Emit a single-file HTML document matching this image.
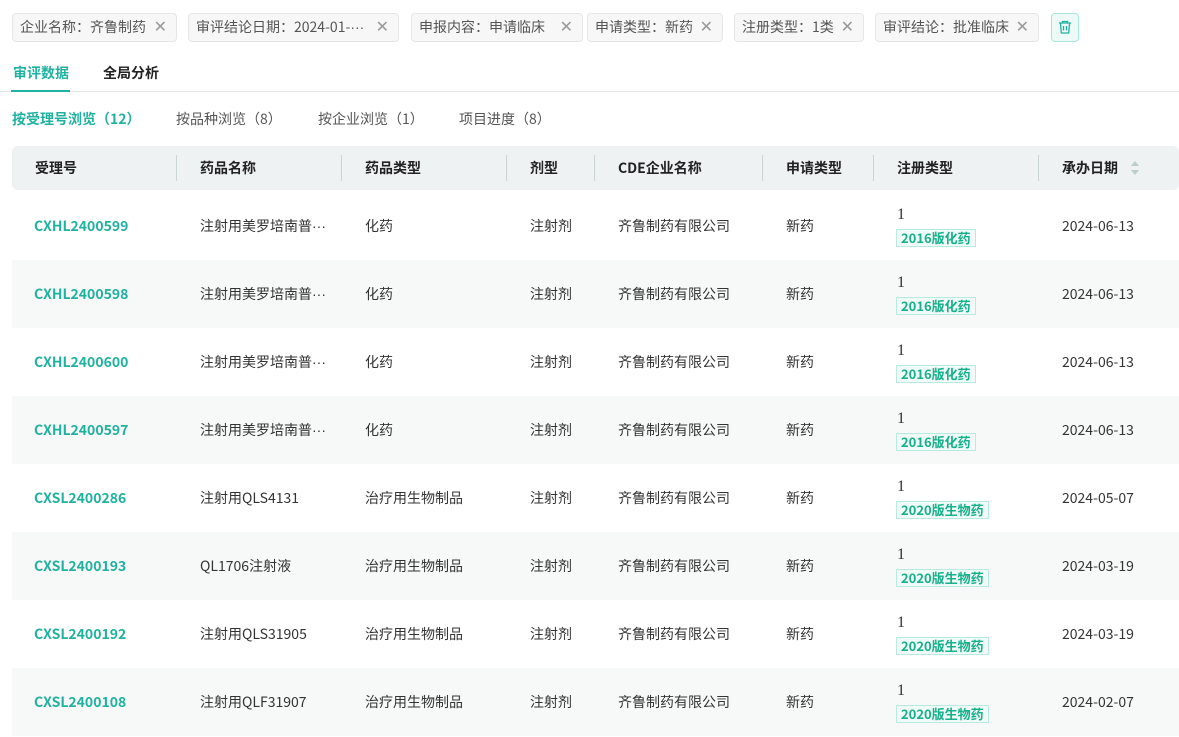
<!DOCTYPE html>
<html><head><meta charset="utf-8"><style>
*{margin:0;padding:0;box-sizing:border-box}
body{width:1179px;height:737px;overflow:hidden;background:#fff;font-family:"Noto Sans CJK SC","Liberation Sans",sans-serif;color:#333;font-size:14px;line-height:20px;position:relative}
.a{position:absolute;white-space:nowrap}
.tag{position:absolute;top:13px;height:29px;border:1px solid #e6e6e6;background:#f7f7f7;border-radius:4px;color:#555;font-size:14px;line-height:27px;padding-left:7px;white-space:nowrap}
.tag .x{position:absolute;right:9px;top:0;color:#999;font-size:16px;font-family:"Liberation Sans",sans-serif}
.el{font-family:"Liberation Sans",sans-serif}
.hdr{position:absolute;left:12px;top:146px;width:1167px;height:44px;background:#eef2f2;border-radius:6px}
.h{position:absolute;top:158px;font-weight:bold;color:#222;font-size:14px}
.dv{position:absolute;top:155px;width:1px;height:26px;background:#ccd5d5}
.row{position:absolute;left:12px;width:1167px;height:68px}
.c{position:absolute;font-size:14px;color:#333;white-space:nowrap}
.id{color:#20b2a0;font-weight:bold}
.bd{position:absolute;height:18px;border:1px solid #b8eadf;background:#f0fbf8;color:#16b08a;font-weight:bold;font-size:13px;line-height:16px;padding:0 4px}
</style></head><body>
<div class="tag" style="left:12px;width:165px">企业名称：齐鲁制药<span class="x">✕</span></div>
<div class="tag" style="left:188px;width:211px">审评结论日期：2024-01-<span class="el">···</span><span class="x">✕</span></div>
<div class="tag" style="left:411px;width:172px">申报内容：申请临床<span class="x">✕</span></div>
<div class="tag" style="left:587px;width:136px">申请类型：新药<span class="x">✕</span></div>
<div class="tag" style="left:734px;width:130px">注册类型：1类<span class="x">✕</span></div>
<div class="tag" style="left:875px;width:164px">审评结论：批准临床<span class="x">✕</span></div>
<div style="position:absolute;left:1051px;top:13px;width:28px;height:29px;border:1px solid #a8e6dc;background:#eefaf8;border-radius:4px">
<svg width="26" height="27" viewBox="0 0 26 27"><g fill="none" stroke="#20b2a0" stroke-width="1.3"><path d="M7 9h12M10.5 9V7.5h5V9M8.5 9.5l.8 9.5h7.4l.8-9.5M11.5 12v4.5M14.5 12v4.5"/></g></svg></div>
<div class="a" style="left:13px;top:63px;font-weight:bold;color:#20b2a0">审评数据</div>
<div class="a" style="left:103px;top:63px;font-weight:bold;color:#222">全局分析</div>
<div class="a" style="left:0;top:91px;width:1179px;height:1px;background:#e6e6e6"></div>
<div class="a" style="left:11px;top:90px;width:59px;height:2px;background:#20b2a0"></div>
<div class="a" style="left:12px;top:109px;font-weight:bold;color:#20b2a0">按受理号浏览（12）</div>
<div class="a" style="left:176px;top:109px;color:#555">按品种浏览（8）</div>
<div class="a" style="left:318px;top:109px;color:#555">按企业浏览（1）</div>
<div class="a" style="left:459px;top:109px;color:#555">项目进度（8）</div>
<div class="hdr"></div>
<div class="h" style="left:35px">受理号</div><div class="dv" style="left:176px"></div>
<div class="h" style="left:200px">药品名称</div><div class="dv" style="left:341px"></div>
<div class="h" style="left:365px">药品类型</div><div class="dv" style="left:506px"></div>
<div class="h" style="left:530px">剂型</div><div class="dv" style="left:594px"></div>
<div class="h" style="left:618px">CDE企业名称</div><div class="dv" style="left:762px"></div>
<div class="h" style="left:786px">申请类型</div><div class="dv" style="left:873px"></div>
<div class="h" style="left:897px">注册类型</div><div class="dv" style="left:1038px"></div>
<div class="h" style="left:1062px">承办日期</div>
<svg class="a" style="left:1130px;top:160px" width="10" height="16"><path d="M1 6l4-5 4 5z M1 10l4 5 4-5z" fill="#bcc"/></svg>
<div id="rows"></div>
<script>
var E='<span class="el">···</span>';
var d=[["CXHL2400599","注射用美罗培南普"+E,"化药","2016版化药","2024-06-13"],
["CXHL2400598","注射用美罗培南普"+E,"化药","2016版化药","2024-06-13"],
["CXHL2400600","注射用美罗培南普"+E,"化药","2016版化药","2024-06-13"],
["CXHL2400597","注射用美罗培南普"+E,"化药","2016版化药","2024-06-13"],
["CXSL2400286","注射用QLS4131","治疗用生物制品","2020版生物药","2024-05-07"],
["CXSL2400193","QL1706注射液","治疗用生物制品","2020版生物药","2024-03-19"],
["CXSL2400192","注射用QLS31905","治疗用生物制品","2020版生物药","2024-03-19"],
["CXSL2400108","注射用QLF31907","治疗用生物制品","2020版生物药","2024-02-07"]];
var h="";
d.forEach(function(r,i){var y=192+i*68;
h+='<div class="row" style="top:'+y+'px;background:'+(i%2?'#f7f8f8':'#fff')+'"></div>';
var t=y+24;
h+='<div class="c id" style="left:34px;top:'+t+'px">'+r[0]+'</div>';
h+='<div class="c" style="left:200px;top:'+t+'px">'+r[1]+'</div>';
h+='<div class="c" style="left:365px;top:'+t+'px">'+r[2]+'</div>';
h+='<div class="c" style="left:530px;top:'+t+'px">注射剂</div>';
h+='<div class="c" style="left:618px;top:'+t+'px">齐鲁制药有限公司</div>';
h+='<div class="c" style="left:786px;top:'+t+'px">新药</div>';
h+='<div class="c" style="left:897px;top:'+(y+13)+'px;font-family:\'Liberation Serif\',serif;font-size:16px">1</div>';
h+='<div class="bd" style="left:896px;top:'+(y+37)+'px">'+r[3]+'</div>';
h+='<div class="c" style="left:1062px;top:'+t+'px">'+r[4]+'</div>';});
document.getElementById("rows").innerHTML=h;
</script>
</body></html>
